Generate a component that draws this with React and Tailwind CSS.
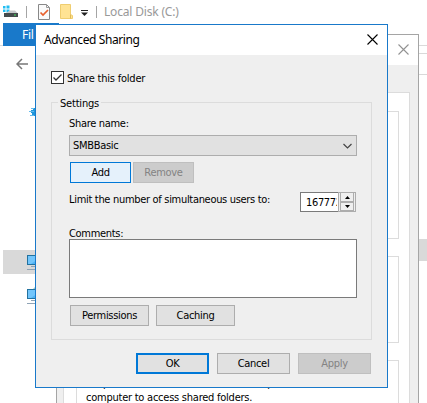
const Close = ({ className }) => (
  <svg className={className} width="11" height="11" viewBox="0 0 11 11" fill="none" stroke="currentColor" strokeWidth="1.1">
    <path d="M.5 .5l10 10M10.5 .5l-10 10" />
  </svg>
);

const Button = ({ className, children }) => (
  <button className={`flex h-[21px] shrink-0 items-center justify-center ${className}`}>
    <span className="mt-px leading-[14px]">{children}</span>
  </button>
);

const plain = 'border border-[#adadad] bg-[#e1e1e1]';
const off = 'border border-[#bfbfbf] bg-[#cccccc] text-[#838383]';

function Computer({ network }) {
  return (
    <svg width="14" height="17" viewBox="0 0 14 17" className="block shrink-0">
      {network && <path d="M4 4L8 0v5z" fill="#8fc7cf" />}
      <rect x=".5" y="2.5" width="16" height="9" fill="#72c5fb" stroke="#23729f" />
      <path d="M4 11l10-7v7z" fill="#4db2f5" />
      <path d="M4 13.5h10M0 16.5h14" stroke="#8fa3b5" />
    </svg>
  );
}

function Explorer() {
  return (
    <div className="flex h-full w-full flex-col bg-white">
      <div className="flex h-[23px] shrink-0 items-start">
        <svg width="92" height="23" viewBox="0 0 92 23">
          <path d="M3 6h2.500v2.500H3zM6.500 5.500H9.500v3H6.500zM3 9.500h2.500V12H3zM6.500 9.500h3v3h-3z" fill="#20bdf2" />
          <path d="M9.500 10.500H15l2.500 2.500H6z" fill="#c5c8ca" />
          <path d="M4 13h14v4H4z" fill="#454b4d" />
          <path d="M14 15h2" stroke="#45e05c" />
          <path d="M26.500 6v12" stroke="#a5a5a5" />
          <path d="M38.500 4.500h8l3 3v12h-11z" fill="#fafafa" stroke="#888" />
          <path d="M46.500 4.500v3h3" fill="none" stroke="#999" />
          <path d="M40.500 12.500l2.500 2.500 5-5" fill="none" stroke="#e8602c" strokeWidth="1.700" />
          <path d="M60.500 4.500h10v10l2 1v3h-12z" fill="#ffe394" stroke="#efcd70" />
          <path d="M70.500 14.500v4" stroke="#e1bb56" />
          <path d="M81 10.500h7" stroke="#222" />
          <path d="M81 12.500h7L84.500 16z" fill="#222" />
        </svg>
        <div className="mt-[6px] ml-[4px] h-3 w-px bg-[#a5a5a5]" />
        <span className="ml-[7px] mt-[3px] font-['Noto_Sans',sans-serif] text-[12px] leading-[18px] tracking-[-0.18px] text-[#999999]">Local Disk (C:)</span>
      </div>
      <div className="flex h-[23px] shrink-0 border-b border-[#dadada] pl-[3px]">
        <div className="h-[23px] w-14 bg-[#1979ca] pl-[19px] font-['Noto_Sans',sans-serif] text-[12px] leading-[23px] text-white">Fil</div>
      </div>
      <div className="flex h-[29px] shrink-0 justify-between">
        <svg className="ml-4 mt-3" width="12" height="12" viewBox="0 0 12 12" fill="none" stroke="#777" strokeWidth="1.500">
          <path d="M12 6H1M6 1L1 6l5 5" />
        </svg>
        <div className="mt-[7px] w-[10px] border-y border-[#d9d9d9]" />
      </div>
      <div className="flex grow justify-between">
        <div className="flex w-[35px] flex-col pl-[3px]">
          <svg className="ml-[25px] mt-[30px] shrink-0" width="10" height="14" viewBox="0 0 10 14">
            <path d="M3 5h4v6H4V8H3zM5 3h3v3H5z" fill="#2097dc" />
            <path d="M1 6.500h5M2 10.500h4M3 3.500h3" stroke="#64bbed" />
          </svg>
          <div className="mt-[131px] flex h-6 shrink-0 bg-[#d9d9d9] pl-6 pt-[3px]"><Computer /></div>
          <div className="ml-6 mt-[13px]"><Computer network /></div>
        </div>
        <div className="mt-[164px] h-[22px] w-[9px] bg-[#d9d9d9]" />
      </div>
    </div>
  );
}

function Properties() {
  return (
    <div className="absolute left-[56px] top-[34px] flex h-[400px] w-[363px] flex-col border border-[#a5a5a5] bg-[#efefef]">
      <div className="flex h-[30px] shrink-0 justify-end bg-white pr-[9px] pt-[9px]"><Close className="text-[#929292]" /></div>
      <div className="ml-[6px] mt-[27px] flex h-[360px] w-[347px] shrink-0 flex-col border border-[#dcdcdc] bg-white pl-3 pt-[18px]">
        <div className="h-[128px] w-[323px] shrink-0 border border-[#dcdcdc]" />
        <div className="mt-[17px] h-[87px] w-[323px] shrink-0 border border-[#dcdcdc]" />
        <div className="mt-[17px] h-[90px] w-[323px] shrink-0 border border-[#dcdcdc] pl-[9px] pt-[16px] leading-[13px] tracking-[-0.24px]">
          <p className="whitespace-nowrap">People must have a user account and password for this</p>
          <p className="mt-px whitespace-nowrap">computer to access shared folders.</p>
        </div>
      </div>
    </div>
  );
}

function Spinner() {
  return (
    <div className="flex h-5 w-14 border border-[#7a7a7a] bg-white">
      <span className="h-[18px] w-[36px] overflow-hidden pl-[5px] leading-[19px] tracking-[-0.35px]">167772</span>
      <div className="-my-px -mr-px ml-auto flex w-[18px] flex-col border border-[#adadad] bg-[#efefef] px-px">
        <div className="flex h-[9px] items-center justify-center border-x border-b border-[#adadad]">
          <svg width="5" height="3" viewBox="0 0 5 3"><path d="M0 3L2.500 0 5 3z" /></svg>
        </div>
        <div className="flex h-[9px] items-center justify-center border border-[#adadad]">
          <svg width="5" height="3" viewBox="0 0 5 3"><path d="M0 0L2.500 3 5 0z" /></svg>
        </div>
      </div>
    </div>
  );
}

function Sharing() {
  return (
    <div className="absolute left-[35px] top-[24px] flex h-[364px] w-[353px] flex-col border border-[#1979ca] bg-[#efefef]">
      <div className="flex h-[30px] shrink-0 justify-between bg-white pl-2 pr-[9px] pt-[9px]">
        <span className="-mt-[3px] font-['Noto_Sans',sans-serif] text-[12px] leading-[18px] tracking-[-0.4px]">Advanced Sharing</span>
        <Close />
      </div>
      <label className="ml-[15px] mt-4 flex h-[13px] items-center">
        <svg width="13" height="13" viewBox="0 0 13 13" fill="none" stroke="#333">
          <rect x=".5" y=".5" width="12" height="12" fill="#fff" />
          <path d="M2.500 6.500L5 9l5.500-5.500" strokeWidth="1.300" />
        </svg>
        <span className="ml-[3px] mt-[2px] tracking-[-0.2px]">Share this folder</span>
      </label>
      <section className="ml-[15px] mt-[18px] flex h-[238px] w-[321px] shrink-0 flex-col border border-[#dcdcdc] pl-[17px]">
        <span className="-ml-[11px] -mt-[6px] h-[14px] self-start bg-[#efefef] px-0.5 leading-[14px] tracking-[-0.2px]">Settings</span>
        <span className="mt-[6px] leading-[14px]">Share name:</span>
        <div className="mt-[4px] flex h-[21px] w-[288px] shrink-0 items-center justify-between border border-[#adadad] bg-[#e1e1e1] pl-[3px] pr-1">
          <span className="mt-px">SMBBasic</span>
          <svg width="9" height="6" viewBox="0 0 9 6" fill="none" stroke="#444" strokeWidth="1.200"><path d="M.5 1l4 4 4-4" /></svg>
        </div>
        <div className="ml-px mt-[6px] flex gap-0.5">
          <Button className="w-[61px] border border-[#0078d7] bg-[#e5f1fb]">Add</Button>
          <Button className={`w-[61px] ${off}`}>Remove</Button>
        </div>
        <div className="mt-[9px] flex w-[287px] justify-between">
          <span className="mt-px leading-[14px]">Limit the number of simultaneous users to:</span>
          <Spinner />
        </div>
        <span className="mt-[15px] h-3 leading-[14px]">Comments:</span>
        <div className="h-[59px] w-[288px] shrink-0 border border-[#7a7a7a] bg-white" />
        <div className="ml-px mt-[7px] flex gap-[7px]">
          <Button className={`w-[79px] ${plain}`}>Permissions</Button>
          <Button className={`w-[79px] ${plain}`}>Caching</Button>
        </div>
      </section>
      <div className="mr-[16px] mt-[13px] flex justify-end gap-2">
        <Button className="w-[73px] border-2 border-[#0078d7] bg-[#e1e1e1]">OK</Button>
        <Button className={`w-[73px] ${plain}`}>Cancel</Button>
        <Button className={`w-[73px] ${off}`}>Apply</Button>
      </div>
    </div>
  );
}

export default function App() {
  return (
    <div className="relative h-[403px] w-[427px] overflow-hidden font-['DejaVu_Sans_Condensed','DejaVu_Sans',sans-serif] text-[11px] leading-[14px] tracking-[-0.31px] text-black">
      <Explorer />
      <Properties />
      <Sharing />
    </div>
  );
}
